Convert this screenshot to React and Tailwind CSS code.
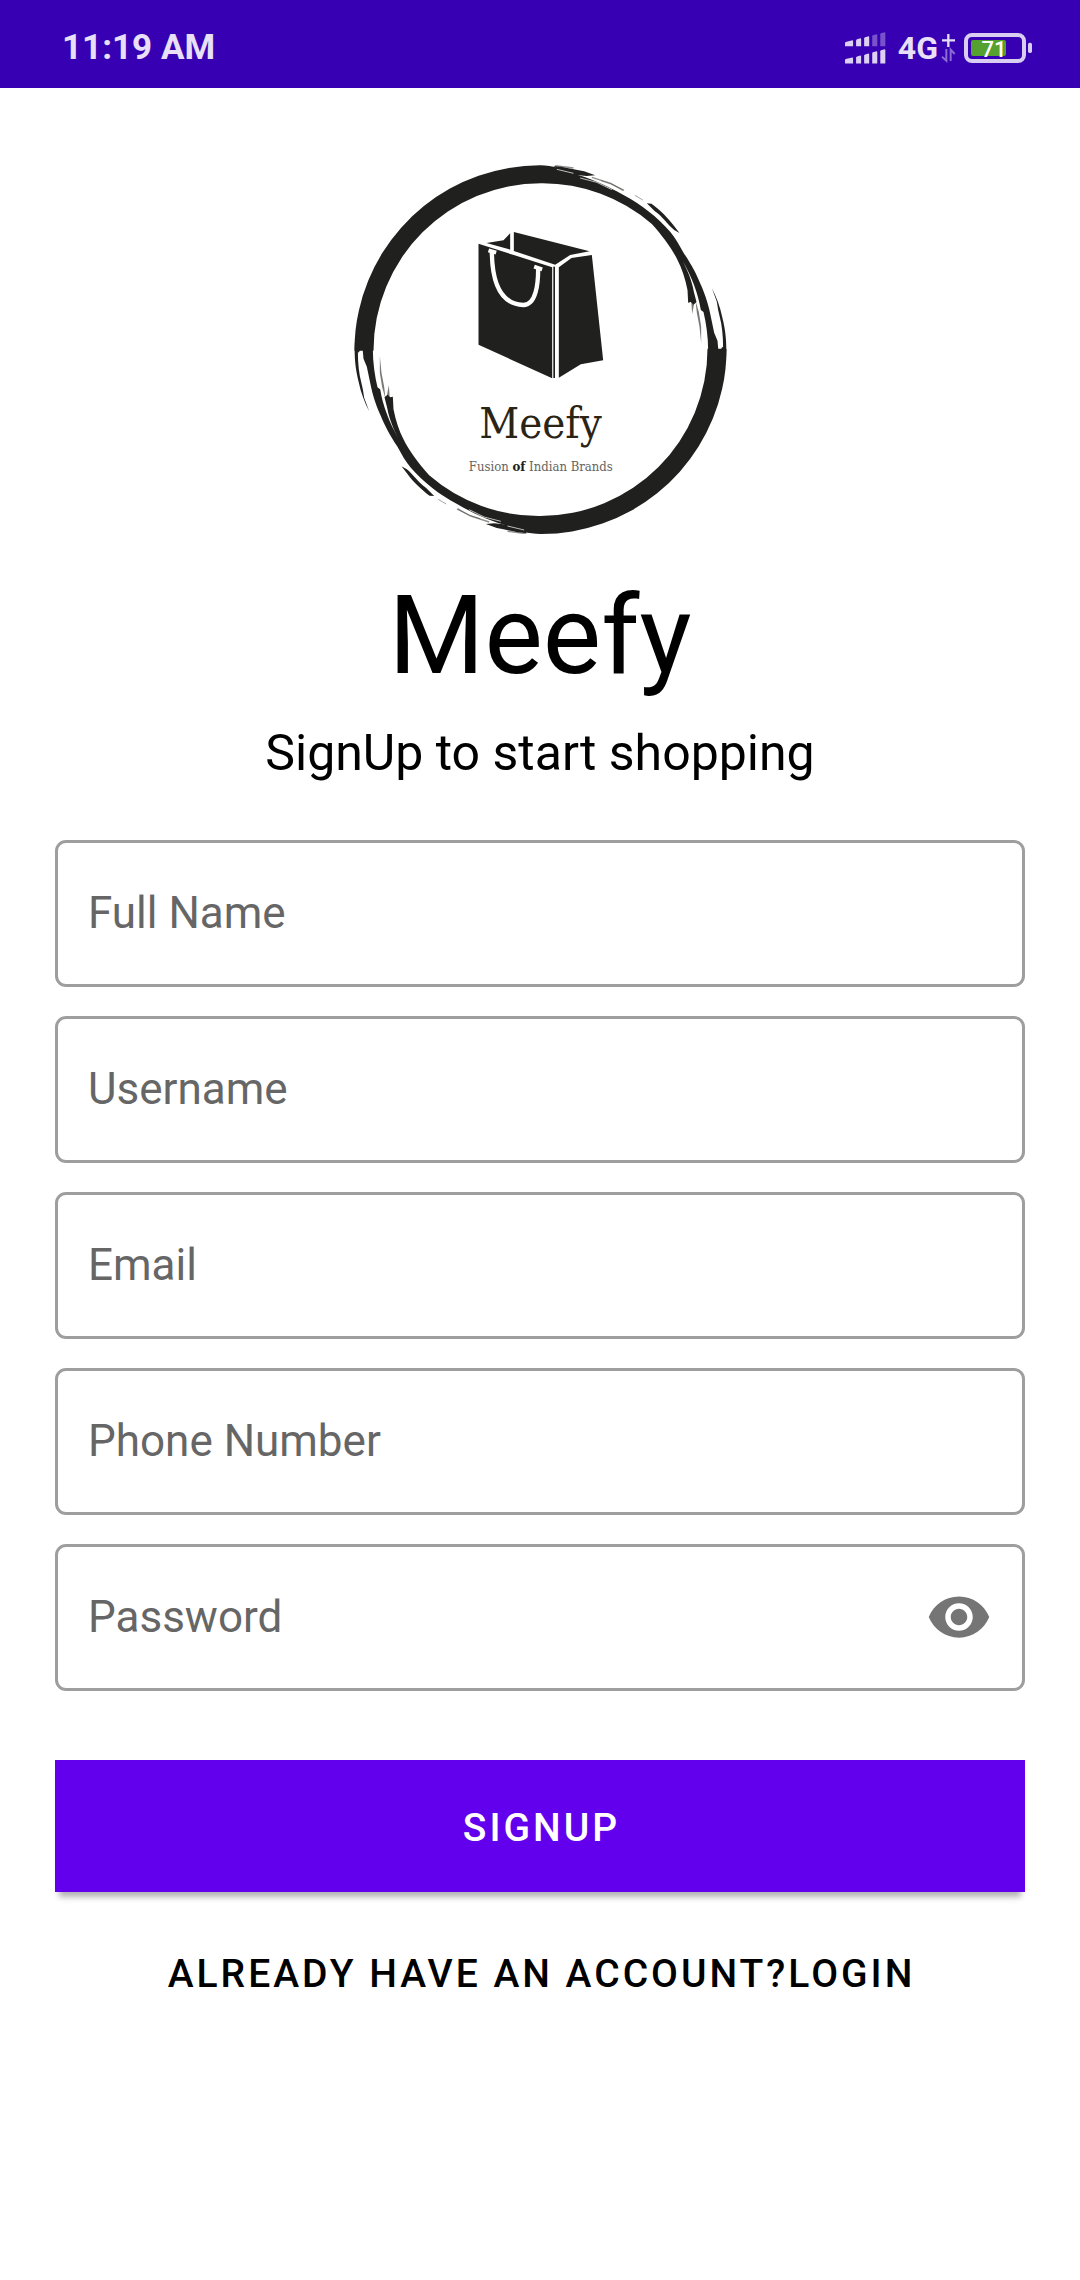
import { useState } from "react";
import { MdVisibility } from "react-icons/md";

const FIELDS = [
  { name: "fullName", label: "Full Name", type: "text" },
  { name: "username", label: "Username", type: "text" },
  { name: "email", label: "Email", type: "email" },
  { name: "phone", label: "Phone Number", type: "tel" },
];

function SignalIcon() {
  return (
    <svg viewBox="75 66 122 94" className="h-8 w-[41px]" fill="#dcd0f3" aria-hidden="true">
      <path d="M75 98 Q75 96 77 95 L97 90 Q99 90 99 92 V108 H75Z" />
      <path d="M108 91 Q108 88 111 87 L121 84 Q123 84 123 87 V108 H108Z" />
      <path d="M132 84 Q132 82 135 81 L145 78 Q147 78 147 81 V108 H132Z" />
      <path d="M156 78 Q156 76 158 75 L169 72 Q171 72 171 75 V108 H156Z" opacity=".4" />
      <path d="M180 72 Q180 70 182 69 L193 66 Q195 66 195 69 V108 H180Z" opacity=".4" />
      <path d="M75 149 Q75 147 77 146 L97 141 Q99 141 99 143 V159 H75Z" />
      <path d="M108 142 Q108 139 111 138 L121 135 Q123 135 123 138 V159 H108Z" />
      <path d="M132 135 Q132 133 135 132 L145 129 Q147 129 147 132 V159 H132Z" />
      <path d="M156 129 Q156 127 158 126 L169 123 Q171 123 171 126 V159 H156Z" />
      <path d="M180 123 Q180 121 182 120 L193 117 Q195 117 195 120 V159 H180Z" />
    </svg>
  );
}

function DataIcon() {
  return (
    <svg viewBox="360 66 45 90" className="h-[30px] w-[15px]" aria-hidden="true">
      <path d="M382 69 V108 M363 88 H402" stroke="#e6dcf7" strokeWidth="7" fill="none" />
      <path
        d="M376 114 V149 L363 137 M389 150 V116 L401 129"
        stroke="#8b6bd3"
        strokeWidth="6"
        fill="none"
      />
    </svg>
  );
}

function BatteryIcon() {
  return (
    <svg viewBox="432 66 204 90" className="h-[30px] w-[68px]" role="img" aria-label="Battery 71">
      <rect x="438" y="72" width="174" height="78" rx="18" fill="none" stroke="#d9cdf2" strokeWidth="12" />
      <rect x="453" y="87" width="105" height="48" rx="6" fill="#55a12f" />
      <rect x="624" y="95" width="12" height="31" rx="5" fill="#d9cdf2" />
      <text
        x="522"
        y="137"
        textAnchor="middle"
        fontSize="66"
        fill="#fff"
        className="font-['Roboto',sans-serif] font-medium"
      >
        71
      </text>
    </svg>
  );
}

function BrushArm() {
  return (
    <g>
      <path d="M43 602 C43 560 47 520 56 482 A556 556 0 0 1 600 46 C640 47 665 56 690 68 C745 82 800 106 850 135 C905 165 950 200 990 245 C1005 262 1018 286 1030 308 C1055 345 1070 375 1080 400 C1098 440 1106 470 1112 500 L1122 548 L1132 572 L1136 616 L1146 590 L1158 602 L1152 645 L1102 650 L1104 602 C1104 560 1098 520 1090 486 L1082 480 C1074 430 1054 380 1028 334 C1042 362 1054 388 1061 425 L1069 456 L1060 464 L1052 456 L1044 458 L1042 420 C1035 385 1025 355 1012 330 C998 300 966 256 935 222 A502 502 0 0 0 602 100 A502 502 0 0 0 100 602 Z" />
      <path d="M1053 450 L1056 492 L1062 460 Z M1066 452 L1076 486 L1083 530 L1083 580 L1078 530 L1070 488 Z" opacity=".6" />
      <path d="M1115 414 C1128 440 1140 470 1146 500 C1156 540 1160 575 1158 620 L1148 615 C1150 580 1148 550 1143 520 L1134 480 L1130 455 Z" />
      <path d="M920 160 L934 161 C960 180 985 205 1000 226 L1018 249 L1002 240 C980 222 968 200 944 184 Z" />
      <path d="M884 136 L908 150 M782 92 L812 102 L852 120" stroke="#20201e" strokeWidth="3" opacity=".4" fill="none" />
      <path d="M640 48 C670 50 700 58 732 64 L765 76 L740 78 L700 74 L665 66 Z" />
      <path d="M645 47 L700 54 M755 82 L812 100 L850 122" stroke="#20201e" strokeWidth="4" opacity=".5" fill="none" />
      <path d="M650 58 L700 70 M720 84 L770 97 L815 119" stroke="#fff" strokeWidth="3" opacity=".7" fill="none" />
    </g>
  );
}

function Logo() {
  return (
    <svg
      viewBox="42 45 1118 1107"
      className="h-[369px] w-[373px]"
      role="img"
      aria-label="Meefy, Fusion of Indian Brands"
    >
      <g fill="#20201e">
        <BrushArm />
        <g transform="rotate(180 601 599)">
          <BrushArm />
        </g>
        <path d="M415 281 L636 352 V685 L415 584 Z" />
        <path d="M656 352 L694 324 L755 315 L789 631 L722 643 L656 683 Z" />
        <path d="M439 279 L490 271 L510 250 V299 Z" />
        <path d="M521 246 L748 304 L690 315 L645 344 L521 303 Z" />
      </g>
      <path d="M642 350 V684" stroke="#20201e" strokeWidth="5" />
      <path
        d="M455 306 C456 395 480 462 549 465 C588 466 594 400 594 356"
        fill="none"
        stroke="#fff"
        strokeWidth="13"
      />
      <path d="M445 301 L468 308 M582 350 L606 358" stroke="#fff" strokeWidth="12" />
      <text
        x="601"
        y="865"
        textAnchor="middle"
        fontSize="130"
        fill="#2b2415"
        className="font-['DejaVu_Serif_Condensed','DejaVu_Serif',serif]"
      >
        Meefy
      </text>
      <text
        x="602"
        y="962"
        textAnchor="middle"
        fontSize="39"
        fill="#66645f"
        className="font-['DejaVu_Serif_Condensed','DejaVu_Serif',serif]"
      >
        Fusion{" "}
        <tspan fill="#20201e" fontWeight="bold">
          of
        </tspan>{" "}
        Indian Brands
      </text>
    </svg>
  );
}

function Field({ name, label, type, children }) {
  return (
    <div className="flex h-[147px] items-center rounded-[11px] border-3 border-[#9e9e9e] px-[30px] pb-0.5 focus-within:border-[#6200ee]">
      <input
        name={name}
        type={type}
        placeholder={label}
        aria-label={label}
        className="h-full min-w-0 flex-1 bg-transparent text-[44px] text-black outline-none placeholder:text-[#666666]"
      />
      {children}
    </div>
  );
}

export default function App() {
  const [shown, setShown] = useState(false);

  return (
    <div className="min-h-screen bg-white font-['Roboto',sans-serif] text-black">
      <header className="flex h-[88px] items-center justify-between bg-[#3700b3] pt-2 pr-12 pl-[62px] text-[#e9e0f8]">
        <span className="text-[35px] font-bold">11:19 AM</span>
        <div className="flex items-center">
          <SignalIcon />
          <span className="ml-3 text-[32px] font-bold">4G</span>
          <span className="ml-[3px]">
            <DataIcon />
          </span>
          <span className="ml-2">
            <BatteryIcon />
          </span>
        </div>
      </header>

      <main className="flex flex-col items-stretch px-[55px] pt-[77px]">
        <div className="flex justify-center">
          <Logo />
        </div>
        <h1 className="mt-[37px] text-center text-[110px] leading-[130px]">Meefy</h1>
        <p className="mt-[22px] text-center text-[50px] leading-[60px]">SignUp to start shopping</p>

        <form className="mt-[57px] flex flex-col gap-[29px]" onSubmit={(e) => e.preventDefault()}>
          {FIELDS.map((field) => (
            <Field key={field.name} {...field} />
          ))}
          <Field name="password" label="Password" type={shown ? "text" : "password"}>
            <button
              type="button"
              aria-label="Show password"
              aria-pressed={shown}
              onClick={() => setShown(!shown)}
              className="text-[#757575]"
            >
              <MdVisibility className="size-[66px]" />
            </button>
          </Field>
          <button
            type="submit"
            className="mt-10 h-[132px] bg-[#6200ee] pt-1 pl-[3px] text-[39px] font-medium tracking-[3px] text-white shadow-[0_9px_6px_-4px_rgba(0,0,0,0.3)]"
          >
            SIGNUP
          </button>
        </form>

        <a
          href="#login"
          className="mt-[54px] pl-[3px] text-center text-[39px] leading-[56px] font-medium tracking-[3px]"
        >
          ALREADY HAVE AN ACCOUNT?LOGIN
        </a>
      </main>
    </div>
  );
}
